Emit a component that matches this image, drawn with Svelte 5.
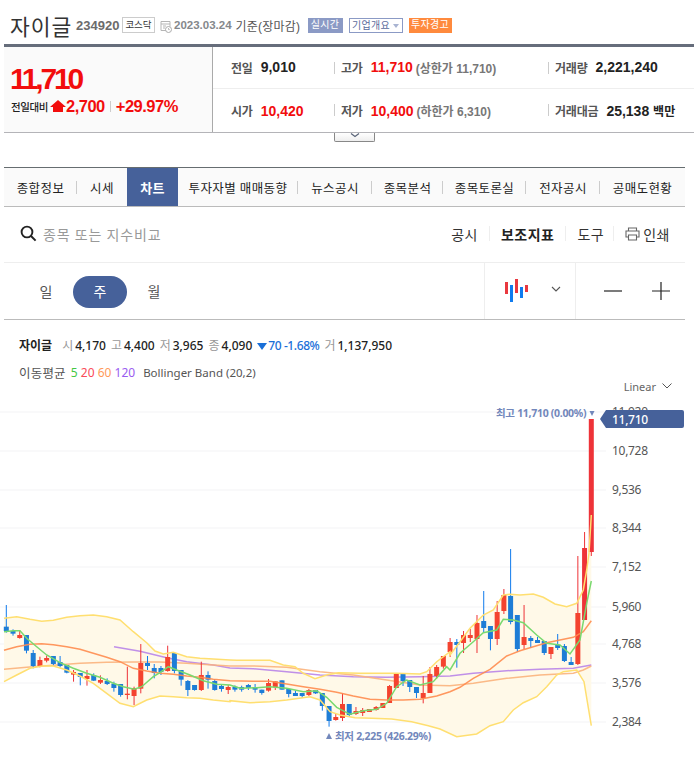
<script>
  const tabs = ['종합정보', '시세', '차트', '투자자별 매매동향', '뉴스공시', '종목분석', '종목토론실', '전자공시', '공매도현황'];
  const yTicks = [[412, '11,920'], [451, '10,728'], [490, '9,536'], [528, '8,344'], [567, '7,152'], [607, '5,960'], [644, '4,768'], [683, '3,576'], [722, '2,384']];

  // traced from the chart, each block has its own origin and a 3x scale
  const seg = (ox, oy, list) => list.map(([x, y]) => [ox + x / 3, oy + y / 3]);
  const pts = (list) => list.map(([x, y]) => x.toFixed(1) + ',' + y.toFixed(1)).join(' ');

  const upper = [
    ...seg(0, 590, [[12,85],[50,80],[90,88],[125,94],[160,91],[200,82],[240,77],[280,75],[320,80],[360,90],[400,125],[440,158],[465,183],[490,192],[520,187],[560,200],[600,205],[640,207],[690,210]]),
    ...seg(220, 620, [[50,121],[150,121],[190,135],[225,140],[250,160],[285,176],[320,165],[355,158],[420,160],[490,160],[530,160],[600,162],[620,155],[650,125],[690,95]]),
    ...seg(440, 560, [[30,285],[60,245],[90,205],[130,165],[160,150],[190,105],[210,103],[240,105],[280,102],[310,112],[345,132],[380,140],[410,130],[430,90],[440,30],[447,-20],[454,-135]])
  ];
  const lower = [
    ...seg(0, 590, [[12,275],[50,255],[90,235],[125,228],[160,228],[200,240],[240,258],[280,280],[320,310],[360,340],[400,350],[440,330],[480,318],[520,320],[560,323],[600,325],[640,330],[690,335]]),
    ...seg(220, 650, [[30,152],[90,158],[150,155],[200,150],[270,140],[300,150],[330,185]]),
    ...seg(335, 650, [[15,195],[60,203],[110,205],[170,207],[230,215],[280,227]]),
    ...seg(440, 560, [[0,507],[50,530],[110,522],[150,497],[190,485],[220,450],[250,428],[290,410],[320,380],[350,345],[370,335],[410,330],[432,365],[454,497]])
  ];
  const ma20 = [
    ...seg(0, 590, [[12,181],[50,170],[90,163],[125,161],[160,164],[200,170],[240,178],[280,190],[320,202],[360,215],[400,235],[440,243],[480,250],[520,253],[560,258],[600,262],[640,268],[690,272]]),
    ...seg(220, 620, [[100,184],[150,184],[200,192],[250,200],[300,208],[350,217],[400,228],[450,238],[500,240],[550,240],[600,238],[650,228],[690,215]]),
    ...seg(440, 560, [[60,382],[100,355],[150,328],[200,288],[240,272],[280,260],[320,248],[360,240],[400,232],[430,215],[454,182]])
  ];
  const ma60 = [
    ...seg(0, 590, [[12,238],[80,232],[160,226],[240,220],[320,217],[400,216],[480,216],[560,220],[640,225],[690,228]]),
    ...seg(220, 620, [[100,138],[200,142],[300,155],[400,165],[500,180],[600,195],[690,197]]),
    ...seg(440, 560, [[100,370],[200,355],[300,345],[400,340],[430,330],[454,318]])
  ];
  const ma120 = [
    ...seg(0, 590, [[342,170],[420,184],[500,203],[560,215],[640,225],[690,234]]),
    ...seg(220, 620, [[100,146],[200,155],[300,165],[400,170],[500,172],[600,170],[690,168]]),
    ...seg(440, 560, [[100,340],[200,332],[300,328],[400,325],[454,315]])
  ];
  const ma5 = [
    ...seg(0, 590, [[12,125],[40,122],[60,122],[80,145],[110,170],[140,195],[180,218],[220,235],[260,250],[300,262],[340,280],[370,290],[403,298],[425,290],[460,260],[480,248],[505,230],[530,240],[570,255],[610,272],[650,283],[690,285]]),
    ...seg(220, 620, [[60,205],[110,203],[150,200],[200,205],[250,215],[290,212],[320,232],[350,262],[390,283],[430,272],[470,268],[500,250],[530,200],[560,180],[600,195],[640,185],[680,140]]),
    ...seg(440, 560, [[30,330],[60,280],[100,245],[130,218],[170,210],[190,178],[220,180],[250,188],[290,225],[320,250],[360,255],[390,282],[420,240],[440,130],[454,63]])
  ];
  const band = [...upper, ...[...lower].reverse()];

  // candles: wick top, body top, body bottom, wick bottom, r = up / b = down
  const part = (oy, list) => list.map(([a, b, c, d, k]) => ({ wt: oy + a / 3, bt: oy + b / 3, bb: oy + c / 3, wb: oy + d / 3, k }));
  const raw = [
    ...part(590, [[45,110,123,128,'b'],[118,123,131,137,'b'],[122,135,144,146,'r'],[135,135,182,190,'b'],[180,189,228,235,'b'],[200,210,228,232,'r'],[197,204,212,217,'r'],[198,198,222,226,'b'],[198,216,228,232,'b'],[225,225,248,250,'b'],[240,246,254,275,'r'],[249,249,261,286,'b'],[240,258,267,287,'r'],[250,255,272,273,'b'],[256,270,278,282,'r'],[265,273,282,285,'b'],[275,281,294,305,'b'],[282,282,315,320,'b'],[230,311,315,328,'r'],[290,294,318,345,'r'],[162,219,296,310,'r'],[198,219,228,240,'b'],[222,234,249,265,'b'],[228,234,246,255,'b'],[167,201,243,245,'r'],[186,189,243,250,'b'],[240,240,269,287,'b'],[270,273,300,318,'b'],[285,285,300,302,'b'],[215,255,300,303,'r'],[244,255,269,296,'b'],[267,273,300,302,'b'],[285,288,297,305,'b'],[285,291,300,312,'r']]),
    ...part(620, [[196,200,209,215,'b'],[197,201,209,215,'b'],[192,195,204,210,'b'],[192,201,209,218,'b'],[209,209,219,224,'b'],[177,189,212,215,'r'],[184,184,202,210,'r'],[181,181,209,209,'b'],[207,207,222,232,'b'],[212,219,228,228,'b'],[219,219,228,234,'b'],[207,210,225,228,'r'],[210,210,220,222,'b'],[219,219,258,272,'b'],[258,258,303,320,'b'],[282,291,300,302,'r'],[220,252,294,303,'r'],[252,252,285,288,'b'],[261,273,282,285,'r'],[264,270,279,288,'r'],[267,267,276,276,'r'],[258,261,270,272,'r'],[249,249,264,264,'r'],[195,198,249,249,'r'],[159,162,204,204,'r'],[159,159,183,198,'b'],[180,180,201,216,'b'],[201,201,219,234,'b'],[168,219,234,250,'r'],[141,162,219,219,'r'],[135,141,168,177,'r']]),
    ...part(560, [[288,288,320,326,'r'],[234,246,276,291,'r'],[237,246,255,323,'b'],[213,225,249,279,'r'],[207,225,234,246,'r'],[165,189,237,279,'r'],[93,183,204,219,'b'],[198,198,237,271,'b'],[123,156,237,255,'r'],[87,105,153,162,'r'],[-33,108,186,193,'b'],[165,165,267,276,'b'],[135,231,255,267,'r'],[228,234,243,264,'b'],[231,240,249,249,'b'],[243,243,279,285,'b'],[261,261,282,297,'r'],[222,255,264,270,'b'],[252,258,303,306,'b'],[291,306,315,315,'b'],[-12,159,312,315,'r'],[-84,-36,180,180,'r'],[-423,-423,-24,-12,'r']])
  ];
  const candles = raw.map((c, i) => ({ ...c, x: 6.3 + (i * 585) / (raw.length - 1) }));
  const bodyColor = (c) => (c.k === 'b' ? '#1e7dd6' : c.bb - c.bt > 60 ? '#ee3338' : '#f4432f');
</script>

<div class="page">
  <header class="head">
    <h1>자이글</h1>
    <span class="code">234920</span>
    <span class="market">코스닥</span>
    <svg class="cal" width="12" height="14" viewBox="0 0 12 14">
      <path d="M1 2.5h9v5M1 2.5v9h5M1 5h9M3 7h3M3 9h2" fill="none" stroke="#b5b5b5" />
      <circle cx="8.5" cy="10.5" r="3" fill="#fff" stroke="#aaa" />
      <path d="M8.5 9v1.6h1.3" fill="none" stroke="#aaa" stroke-width=".8" />
    </svg>
    <span class="date">2023.03.24</span>
    <span class="base">기준(장마감)</span>
    <span class="tag live">실시간</span>
    <span class="tag info">기업개요<i></i></span>
    <span class="tag warn">투자경고</span>
  </header>

  <section class="summary">
    <div class="now">
      <div class="price">11,710</div>
      <div class="diff">
        <span class="dlabel">전일대비</span>
        <svg width="16" height="13" viewBox="0 0 16 13"><path d="M8 0 16 7H13V12H3V7H0Z" fill="#f20d0d" /></svg>
        <b>2,700</b><i></i><b class="pct">+29.97%</b>
      </div>
    </div>
    <div class="stats">
      <div class="cell c1"><span class="lb">전일</span><b>9,010</b></div>
      <div class="cell c2"><span class="lb">고가</span><b class="red">11,710</b><span class="lim">(상한가 11,710)</span></div>
      <div class="cell c3"><span class="lb">거래량</span><b>2,221,240</b></div>
      <div class="cell c1 low"><span class="lb">시가</span><b class="red">10,420</b></div>
      <div class="cell c2 low"><span class="lb">저가</span><b class="red">10,400</b><span class="lim">(하한가 6,310)</span></div>
      <div class="cell c3 low"><span class="lb">거래대금</span><b>25,138 <small>백만</small></b></div>
    </div>
  </section>
  <div class="toggle">
    <svg width="10" height="5" viewBox="0 0 10 5"><path d="M1 .5 5 3.5 9 .5" fill="none" stroke="#5a6478" stroke-width="1.2" /></svg>
  </div>

  <nav class="tabs">
    {#each tabs as t, i}
      <span class="tab" class:active={i === 2}>{t}</span>
    {/each}
  </nav>

  <div class="searchrow">
    <svg class="mag" width="17" height="17" viewBox="0 0 17 17">
      <circle cx="7" cy="7" r="5.4" fill="none" stroke="#222" stroke-width="1.9" />
      <path d="M11 11 15.6 15.6" stroke="#222" stroke-width="2" />
    </svg>
    <span class="ph">종목 또는 지수비교</span>
    <div class="tools">
      <span>공시</span><i></i><b>보조지표</b><i></i><span>도구</span><i></i>
      <svg width="15" height="14" viewBox="0 0 15 14">
        <path d="M3.5 4V1h8v3M3.5 10H1V4h13v6h-2.500M3.500 8h8v5h-8Z" fill="none" stroke="#666" stroke-width="1.100" />
      </svg>
      <span class="print">인쇄</span>
    </div>
  </div>

  <div class="periodrow">
    <div class="periods">
      <span>일</span><span class="on">주</span><span>월</span>
    </div>
    <div class="type">
      <svg width="24" height="24" viewBox="0 0 24 24">
        <rect x="0" y="3" width="3" height="12" fill="#e9383f" />
        <rect x="5" y="6" width="3" height="17" fill="#0f7bef" />
        <rect x="10" y="0" width="3" height="14" fill="#e9383f" />
        <rect x="15" y="8" width="3" height="11" fill="#0f7bef" />
        <rect x="20" y="6" width="3" height="7" fill="#e9383f" />
      </svg>
      <svg class="chev" width="10" height="6" viewBox="0 0 10 6"><path d="M1 1 5 5 9 1" fill="none" stroke="#555" stroke-width="1.100" /></svg>
    </div>
    <div class="zoom">
      <svg width="18" height="18" viewBox="0 0 18 18"><path d="M0 9H18" stroke="#222" stroke-width="1.200" /></svg>
      <svg width="18" height="18" viewBox="0 0 18 18"><path d="M0 9H18M9 0V18" stroke="#222" stroke-width="1.200" /></svg>
    </div>
  </div>

  <div class="quote">
    <b class="nm">자이글</b>
    <span class="q"><em>시</em>4,170</span>
    <span class="q"><em>고</em>4,400</span>
    <span class="q"><em>저</em>3,965</span>
    <span class="q"><em>종</em>4,090</span>
    <span class="chg"><svg width="10" height="8" viewBox="0 0 10 8"><path d="M0 1H10L5 8Z" fill="#1a6fd8" /></svg>70 -1.68%</span>
    <span class="q"><em>거</em>1,137,950</span>
  </div>
  <div class="legend">
    <span class="ma">이동평균</span>
    <span class="nums"><span class="g">5</span> <span class="r">20</span> <span class="o">60</span> <span class="p">120</span></span>
    <span class="bb">Bollinger Band (20,2)</span>
  </div>
  <div class="scale">Linear <svg width="10" height="6" viewBox="0 0 10 6"><path d="M.5.5 5 5 9.500.5" fill="none" stroke="#555" /></svg></div>

  <svg class="chart" width="694" height="358" viewBox="0 400 694 358">
    {#each yTicks as [y]}
      <line x1="0" x2="606" y1={y} y2={y} stroke="#f3f3f5" />
    {/each}
    <polygon points={pts(band)} fill="#fff9e8" />
    <polyline points={pts(ma120)} fill="none" stroke="#b57ee8" stroke-width="1.500" opacity=".85" />
    <polyline points={pts(ma60)} fill="none" stroke="#fbb27c" stroke-width="1.500" opacity=".9" />
    {#each candles as c}
      <rect x={c.x - 0.5} y={c.wt} width="1" height={c.wb - c.wt} fill={c.k === 'r' ? '#ee3338' : '#117bec'} />
      <rect x={c.x - 2.5} y={c.bt} width="5" height={Math.max(c.bb - c.bt, 1)} fill={bodyColor(c)} />
    {/each}
    <polyline points={pts(upper)} fill="none" stroke="#ffdf70" stroke-width="1.500" />
    <polyline points={pts(lower)} fill="none" stroke="#ffdf70" stroke-width="1.500" />
    <polyline points={pts(ma20)} fill="none" stroke="#ff8c4f" stroke-width="1.500" opacity=".9" />
    <polyline points={pts(ma5)} fill="none" stroke="#79d96f" stroke-width="1.500" />

    {#each yTicks as [y, t]}
      <text class="tick" x="612" y={y + 4}>{t}</text>
    {/each}
    <path d="M600 419 606 410H682Q684 410 684 412V426Q684 428 682 428H606Z" fill="#46619a" />
    <text class="bubble" x="612" y="424">11,710</text>
    <text class="mark" x="496" y="417">최고 11,710 (0.00%)</text>
    <path d="M589.500 411H594.500L592 416Z" fill="#7287bb" />
    <path d="M326 739H332L329 733Z" fill="#7287bb" />
    <text class="mark" x="335" y="740">최저 2,225 (426.29%)</text>
  </svg>
</div>

<style>
  :global(body) {
    margin: 0;
    background: #fff;
  }

  .page {
    width: 694px;
    height: 758px;
    overflow: hidden;
    position: relative;
    font-family: "Noto Sans", "Noto Sans CJK KR", sans-serif;
    color: #333;
  }

  .head {
    display: flex;
    align-items: center;
    height: 44px;
    padding: 6px 0 0 10px;
    box-sizing: border-box;
    font-family: "Liberation Sans", "Noto Sans CJK KR", sans-serif;
  }

  h1 {
    margin: 0;
    font-size: 21.500px;
    font-weight: 400;
    letter-spacing: 1px;
    color: #333;
    width: 66px;
  }

  .code {
    font-size: 13px;
    font-weight: 700;
    color: #6b6b6b;
    width: 46px;
  }

  .market {
    box-sizing: border-box;
    width: 33px;
    height: 16px;
    line-height: 14px;
    border: 1px solid #ccc;
    font-size: 9.500px;
    text-align: center;
    color: #333;
  }

  .cal {
    margin: 2px 2px 0 5px;
  }

  .date {
    font-size: 11.500px;
    font-weight: 700;
    color: #85888c;
    margin-right: 4px;
  }

  .base {
    font-size: 12px;
    color: #555;
    letter-spacing: .2px;
    width: 72px;
  }

  .tag {
    box-sizing: border-box;
    height: 15px;
    line-height: 14px;
    font-size: 10px;
    text-align: center;
    letter-spacing: .3px;
  }

  .live {
    width: 35px;
    background: #8b9ac5;
    color: #fff;
    margin-right: 6px;
  }

  .info {
    width: 54px;
    border: 1px solid #8b9ac5;
    color: #5a6b9c;
    line-height: 13px;
    margin-right: 6px;
  }

  .info i {
    display: inline-block;
    margin-left: 3px;
    vertical-align: 1px;
    border: 3px solid transparent;
    border-top: 4px solid #a9b4d2;
    border-bottom: 0;
  }

  .warn {
    width: 43px;
    background: #ff8a3d;
    color: #fff;
  }

  .summary {
    display: flex;
    margin-left: 4px;
    height: 89px;
    box-sizing: border-box;
    border-top: 3px solid #666d7b;
    border-bottom: 1px solid #b4b4b8;
    font-family: "Liberation Sans", "Noto Sans CJK KR", sans-serif;
  }

  .now {
    width: 209px;
    box-sizing: border-box;
    background: #fafafa;
    border-right: 1px solid #aaa;
    padding: 17px 0 0 6px;
  }

  .price {
    font-size: 30px;
    line-height: 30px;
    font-weight: 700;
    color: #f20d0d;
    letter-spacing: -3.200px;
  }

  .diff {
    display: flex;
    align-items: center;
    margin-top: 2px;
    height: 20px;
    font-size: 16.500px;
    color: #f20d0d;
    letter-spacing: -.5px;
  }

  .dlabel {
    font-size: 10.500px;
    font-weight: 500;
    color: #222;
    width: 39px;
    margin-left: 1px;
    letter-spacing: -.4px;
  }

  .diff svg {
    margin-right: 0;
  }

  .diff i {
    width: 1px;
    height: 11px;
    background: #ccc;
    margin: 0 5px;
  }

  .stats {
    flex: 1;
    display: grid;
    grid-template-columns: 121px 214px 1fr;
    grid-template-rows: 42px 1fr;
  }

  .cell {
    display: flex;
    align-items: center;
    font-size: 12px;
    border-bottom: 1px solid #eee;
    position: relative;
    padding-bottom: 1px;
    box-sizing: border-box;
  }

  .cell.low {
    border-bottom: 0;
    padding-bottom: 0;
  }

  .c1 {
    padding-left: 18px;
  }

  .c2,
  .c3 {
    padding-left: 7px;
  }

  .c2::before,
  .c3::before {
    content: "";
    position: absolute;
    left: 0;
    top: 15px;
    width: 1px;
    height: 12px;
    background: #ccc;
  }

  .lb {
    font-weight: 700;
    color: #555;
    margin-right: 8px;
    letter-spacing: -.2px;
  }

  .cell b {
    font-size: 14px;
    color: #222;
  }

  .cell b small {
    font-size: 12px;
  }

  .cell b.red {
    color: #f20d0d;
  }

  .lim {
    margin-left: 3px;
    color: #777;
    font-size: 12px;
    font-weight: 700;
  }

  .toggle {
    width: 41px;
    height: 9px;
    box-sizing: border-box;
    margin-left: 334px;
    border: 1px solid #888;
    border-top: 0;
    border-radius: 0 0 2px 2px;
    background: linear-gradient(#fff, #eee);
    display: flex;
    justify-content: center;
  }

  .toggle svg {
    display: block;
  }

  .tabs {
    display: grid;
    grid-template-columns: 73px 50px 51px 120px 74px 71px 83px 74px 85px;
    margin: 25px 9px 0 4px;
    height: 40px;
    box-sizing: border-box;
    border-top: 1px solid #666d70;
    border-bottom: 1px solid #bbb;
    background: #fafafa;
    font-size: 12.500px;
    letter-spacing: .4px;
    color: #222;
  }

  .tab {
    display: flex;
    align-items: center;
    justify-content: center;
    position: relative;
    white-space: nowrap;
  }

  .tab::after {
    content: "";
    position: absolute;
    right: 0;
    top: 13px;
    height: 13px;
    width: 1px;
    background: #ccc;
  }

  .tab:nth-child(2)::after,
  .tab:nth-child(3)::after,
  .tab:last-child::after {
    display: none;
  }

  .active {
    background: #46619a;
    color: #fff;
    font-weight: 700;
    font-size: 13px;
  }

  .searchrow {
    display: flex;
    align-items: center;
    margin: 0 9px 0 4px;
    height: 56px;
    box-sizing: border-box;
    border-bottom: 1px solid #eee;
    padding: 0 0 2px 16px;
  }

  .ph {
    margin-left: 6px;
    font-size: 14px;
    color: #999;
    letter-spacing: .8px;
  }

  .tools {
    margin-left: auto;
    display: flex;
    align-items: center;
    font-size: 14px;
    letter-spacing: .5px;
    color: #333;
    padding-right: 15px;
  }

  .tools b {
    font-weight: 700;
    color: #222;
  }

  .tools i {
    width: 1px;
    height: 15px;
    background: #eee;
    margin: 0 11px;
  }

  .tools i:last-of-type {
    margin: 0 11px 0 9px;
  }

  .print {
    margin-left: 3px;
  }

  .periodrow {
    display: flex;
    margin: 0 9px 0 4px;
    height: 57px;
    box-sizing: border-box;
    border-bottom: 1px solid #bbb;
  }

  .periods {
    flex: 1;
    display: flex;
    align-items: center;
    padding: 2px 0 0 15px;
    font-size: 14px;
    color: #555;
  }

  .periods span {
    width: 54px;
    height: 32px;
    line-height: 32px;
    text-align: center;
  }

  .periods .on {
    background: #46619a;
    color: #fff;
    border-radius: 16px;
  }

  .type {
    width: 92px;
    box-sizing: border-box;
    border-left: 1px solid #eee;
    border-right: 1px solid #eee;
    display: flex;
    align-items: center;
    padding: 0 14px 0 20px;
    justify-content: space-between;
  }

  .chev {
    margin-top: -4px;
  }

  .zoom {
    width: 109px;
    display: flex;
    align-items: center;
    justify-content: space-between;
    padding: 0 15px 0 28px;
    box-sizing: border-box;
  }

  .quote {
    display: flex;
    align-items: center;
    gap: 5px;
    margin-top: 16px;
    padding-left: 19px;
    height: 18px;
    font-size: 12px;
    font-weight: 500;
    color: #222;
  }

  .nm {
    font-weight: 700;
    margin-right: 5px;
  }

  .q em {
    font-style: normal;
    font-weight: 400;
    color: #999;
    margin-right: 2px;
  }

  .chg {
    color: #1a6fd8;
    letter-spacing: -.4px;
  }

  .chg svg {
    margin-right: 1px;
  }

  .legend {
    display: flex;
    align-items: center;
    margin-top: 9px;
    padding-left: 19px;
    height: 18px;
    font-size: 12px;
    color: #555;
  }

  .ma {
    font-size: 12.500px;
    letter-spacing: .2px;
  }

  .nums {
    margin-left: 5px;
  }

  .bb {
    margin-left: 8px;
    color: #555;
    font-size: 11.500px;
  }

  .g { color: #43c743; }
  .r { color: #fa4a5a; }
  .o { color: #ff9a5a; }
  .p { color: #9a5cf0; }

  .scale {
    display: flex;
    justify-content: flex-end;
    align-items: center;
    gap: 6px;
    padding-right: 22px;
    height: 16px;
    margin-top: -3px;
    font-size: 11px;
    color: #666;
  }

  .chart {
    display: block;
    margin-top: 6px;
  }

  .tick {
    font-size: 12px;
    letter-spacing: -.3px;
    fill: #555;
    font-family: "Noto Sans", sans-serif;
  }

  .bubble {
    font-size: 12px;
    letter-spacing: -.3px;
    font-weight: 500;
    fill: #fff;
    font-family: "Noto Sans", sans-serif;
  }

  .mark {
    font-size: 10.500px;
    font-weight: 700;
    fill: #7287bb;
    letter-spacing: -.3px;
  }
</style>
